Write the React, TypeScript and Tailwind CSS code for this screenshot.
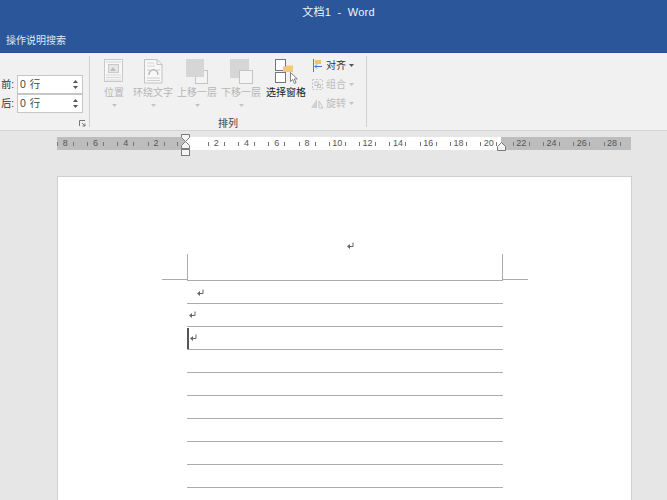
const FONT = { fontFamily: '"Liberation Sans", "Noto Sans CJK SC", sans-serif' };

function Spinner({ label }: { label: string }) {
  return (
    <div className="flex items-center justify-end gap-[3px] h-[19px]">
      <span className="text-[10px] text-[#333]">{label}</span>
      <div className="w-[66px] h-[19px] bg-white border border-[#c6c6c6] flex items-center justify-between pl-[2px] pr-[4px]">
        <span className="text-[10.5px] tracking-[0.5px] text-[#444]">0 行</span>
        <div className="flex flex-col gap-[3px]">
          <svg width="5" height="3" viewBox="0 0 5 3"><path d="M2.5 0 5 3H0z" fill="#555" /></svg>
          <svg width="5" height="3" viewBox="0 0 5 3"><path d="M0 0h5L2.5 3z" fill="#555" /></svg>
        </div>
      </div>
    </div>
  );
}

function PositionIcon() {
  return (
    <svg width="20" height="24" viewBox="0 0 20 24" fill="none" stroke="#c9c9c9">
      <rect x="0.5" y="0.5" width="18" height="22" fill="#f7f7f7" />
      <rect x="4.5" y="5.5" width="10" height="8" fill="#e6e6e6" />
      <path d="M6 12l3-4 3 4z" fill="#bdbdbd" stroke="none" />
      <path d="M2 3h15M2 16h15M2 18.5h15M2 21h15" stroke="#d6d6d6" />
    </svg>
  );
}

function WrapIcon() {
  return (
    <svg width="19" height="25" viewBox="0 0 19 25" fill="none" stroke="#c2c2c2">
      <path d="M0.5 0.5H13L18 5.5V24H0.5z" fill="#f7f7f7" />
      <path d="M13 0.5V5.5H18" />
      <path d="M3 4h7M3 7h8" stroke="#d6d6d6" />
      <path d="M5 16c0-7 9-7 9 0" strokeWidth="1.5" stroke="#b5b5b5" />
      <path d="M3 11h3M13 11h3M3 19h13M3 21.5h13" stroke="#cfcfcf" />
    </svg>
  );
}

function LayerIcon({ back }: { back?: boolean }) {
  return (
    <svg width="23" height="25" viewBox="0 0 23 25">
      {back ? (
        <>
          <rect x="0" y="0" width="19" height="19" fill="#d6d6d6" />
          <rect x="9.5" y="11.5" width="13" height="13" fill="#f4f4f4" stroke="#c4c4c4" />
        </>
      ) : (
        <>
          <rect x="9.5" y="11.5" width="12" height="13" fill="#f4f4f4" stroke="#c4c4c4" />
          <rect x="0" y="0" width="18" height="18" fill="#d6d6d6" />
        </>
      )}
    </svg>
  );
}

function SelectionIcon() {
  return (
    <svg width="25" height="26" viewBox="0 0 25 26" fill="none">
      <rect x="1.5" y="0.5" width="10" height="11" fill="#fff" stroke="#777" />
      <rect x="1.5" y="13.5" width="10" height="10" fill="#fff" stroke="#777" />
      <path d="M9 7.5h3l1-1h6v6.5H9z" fill="#f3c879" />
      <path d="M16.5 13.5v9l2.2-2 1.8 4 1.6-.8-1.8-3.8h3z" fill="#fff" stroke="#666" strokeWidth="0.8" />
    </svg>
  );
}

function LargeButton({ label, icon, active, chevron = true, width }: { label: string; icon: React.ReactNode; active?: boolean; chevron?: boolean; width: string }) {
  return (
    <div className={`${width} shrink-0 flex flex-col items-center`}>
      <div className="h-[27px] flex items-start justify-center">{icon}</div>
      <div className={`text-[10px] leading-[14px] whitespace-nowrap ${active ? "text-[#222]" : "text-[#b5b5b5]"}`}>{label}</div>
      {chevron && (
        <svg className="mt-[4px]" width="5" height="3" viewBox="0 0 5 3"><path d="M0 0h5L2.5 3z" fill="#c4c4c4" /></svg>
      )}
    </div>
  );
}

function SmallButton({ label, icon, active }: { label: string; icon: React.ReactNode; active?: boolean }) {
  return (
    <div className="flex items-center h-[19px] gap-[2px]">
      <div className="w-[13px] flex justify-center">{icon}</div>
      <span className={`text-[10px] ${active ? "text-[#333]" : "text-[#bcbcbc]"}`}>{label}</span>
      <svg className="ml-[1px]" width="5" height="3" viewBox="0 0 5 3"><path d="M0 0h5L2.5 3z" fill={active ? "#555" : "#c4c4c4"} /></svg>
    </div>
  );
}

function RulerCell({ n }: { n: number }) {
  return (
    <div className="w-[30.3px] shrink-0 flex justify-center">
      <div className="w-[17px] flex items-center justify-between">
        <span className="w-px h-[4px] bg-[#777]" />
        <span className="text-[9px] leading-none text-[#555]">{n}</span>
        <span className="w-px h-[4px] bg-[#777]" />
      </div>
    </div>
  );
}

function ReturnMark() {
  return (
    <svg width="8" height="8" viewBox="0 0 8 8" fill="none" stroke="#666">
      <path d="M7 0.5V4.5H2" />
      <path d="M4 2 1 4.5 4 7z" fill="#666" stroke="none" />
    </svg>
  );
}

function Line({ children }: { children?: React.ReactNode }) {
  return <div className="h-[23px] border-b border-[#ababab] flex items-center">{children}</div>;
}

export default function App() {
  return (
    <div className="relative w-[667px] h-[500px] overflow-hidden bg-[#e6e6e6] flex flex-col" style={FONT}>
      <div className="h-[28px] shrink-0 bg-[#2b579a] flex items-center justify-center pl-[10px] pb-[4px] text-[11px] tracking-[0.2px] text-[#f2f5fa]">
        文档1&nbsp;&nbsp;-&nbsp;&nbsp;Word
      </div>
      <div className="h-[25px] shrink-0 bg-[#2b579a] border-b border-[#24508f] flex items-center pl-[6px] text-[10px] text-[#dfe7f3]">
        操作说明搜索
      </div>

      <div className="h-[78px] shrink-0 bg-[#f1f1f1] border-b border-[#d4d4d4] flex">
        <div className="relative w-[90px] shrink-0 border-r border-[#cfcfcf] my-[3px] pt-[19px] pr-[6px]">
          <div className="flex flex-col">
            <Spinner label="前:" />
            <Spinner label="后:" />
          </div>
          <svg className="absolute right-[3px] bottom-[0px]" width="7" height="7" viewBox="0 0 7 7" fill="none" stroke="#777">
            <path d="M0.5 6V0.5H6" />
            <path d="M3 3l3 3M6 3.5V6H3.5" />
          </svg>
        </div>
        <div className="w-[277px] shrink-0 border-r border-[#cfcfcf] mt-[3px] mb-[3px] pt-[3px] flex flex-col">
          <div className="flex flex-1 min-h-0">
            <div className="flex ml-[4px]">
              <LargeButton width="w-[40px]" label="位置" icon={<PositionIcon />} />
              <LargeButton width="w-[38px]" label="环绕文字" icon={<WrapIcon />} />
              <div className="w-[3px]" />
              <LargeButton width="w-[44px]" label="上移一层" icon={<LayerIcon />} />
              <LargeButton width="w-[44px]" label="下移一层" icon={<LayerIcon back />} />
              <LargeButton width="w-[46px]" label="选择窗格" active chevron={false} icon={<SelectionIcon />} />
            </div>
            <div className="ml-[2px] -mt-[3px] flex flex-col">
              <SmallButton
                active
                label="对齐"
                icon={
                  <svg width="11" height="13" viewBox="0 0 11 13" fill="none">
                    <path d="M1.5 0v13" stroke="#777" />
                    <path d="M3 1h6v4H3z" fill="#f3c266" />
                    <path d="M3 7.5h7M3 7.5l2-2M3 7.5l2 2" stroke="#3b78c2" />
                  </svg>
                }
              />
              <SmallButton
                label="组合"
                icon={
                  <svg width="13" height="13" viewBox="0 0 13 13" fill="none" stroke="#c6c6c6">
                    <rect x="1.5" y="1.5" width="10" height="10" strokeDasharray="2 1.5" />
                    <rect x="4" y="4" width="3.5" height="3.5" />
                    <rect x="6.5" y="6.5" width="3" height="3" />
                  </svg>
                }
              />
              <SmallButton
                label="旋转"
                icon={
                  <svg width="13" height="11" viewBox="0 0 13 11">
                    <path d="M6 1v9H0z" fill="#d0d0d0" />
                    <path d="M8 3l4 7H8z" fill="none" stroke="#c6c6c6" />
                  </svg>
                }
              />
            </div>
          </div>
          <div className="-mb-[4px] text-center text-[10px] leading-[14px] text-[#444]">排列</div>
        </div>
      </div>

      <div className="relative shrink-0 mt-[6px] ml-[57px] w-[574px] h-[13px] flex text-[#555]">
        <div className="w-[129px] shrink-0 bg-[#bdbdbd] flex items-center">
          <div className="-ml-[7px] flex">
            <RulerCell n={8} />
            <RulerCell n={6} />
            <RulerCell n={4} />
            <RulerCell n={2} />
          </div>
          <span className="ml-[6px] w-px h-[4px] bg-[#777]" />
        </div>
        <div className="w-[315px] shrink-0 bg-white flex items-center">
          <span className="ml-[7px] mr-[8px] w-px h-[4px] bg-[#777]" />
          {[2, 4, 6, 8, 10, 12, 14, 16, 18, 20].map((n) => (
            <RulerCell key={n} n={n} />
          ))}
        </div>
        <div className="flex-1 bg-[#bdbdbd] flex items-center pl-[5px]">
          {[22, 24, 26, 28].map((n) => (
            <RulerCell key={n} n={n} />
          ))}
        </div>
        <svg className="absolute left-[123px] -top-[3px]" width="12" height="24" viewBox="0 0 12 24" fill="#f4f4f4" stroke="#7a7a7a">
          <path d="M1.5 0.5h8v3l-4 4-4-4z" />
          <path d="M5.5 7.5l4 4v3h-8v-3z" />
          <rect x="1.5" y="15.5" width="8" height="6" />
        </svg>
        <svg className="absolute left-[439px] top-[5px]" width="11" height="10" viewBox="0 0 11 10" fill="#f4f4f4" stroke="#7a7a7a">
          <path d="M5.5 0.5l4 4v4h-8v-4z" />
        </svg>
      </div>

      <div className="mt-[26px] ml-[57px] w-[575px] flex-1 bg-white border border-[#cfcfcf] border-b-0 pl-[129px] pt-[64px]">
        <div className="w-[316px]">
          <div className="h-[13px] pt-[1px] flex justify-center pl-[10px]">
            <ReturnMark />
          </div>
          <div className="relative h-[27px] border-l border-r border-b border-[#ababab]">
            <span className="absolute right-full bottom-[0px] w-[26px] h-px bg-[#ababab]" />
            <span className="absolute left-full bottom-[0px] w-[26px] h-px bg-[#ababab]" />
          </div>
          <Line>
            <span className="ml-[9px] mt-[1px]"><ReturnMark /></span>
          </Line>
          <Line>
            <span className="ml-[1px]"><ReturnMark /></span>
          </Line>
          <Line>
            <span className="w-[2px] h-[21px] bg-[#555]" />
            <ReturnMark />
          </Line>
          <Line />
          <Line />
          <Line />
          <Line />
          <Line />
          <Line />
        </div>
      </div>
    </div>
  );
}
